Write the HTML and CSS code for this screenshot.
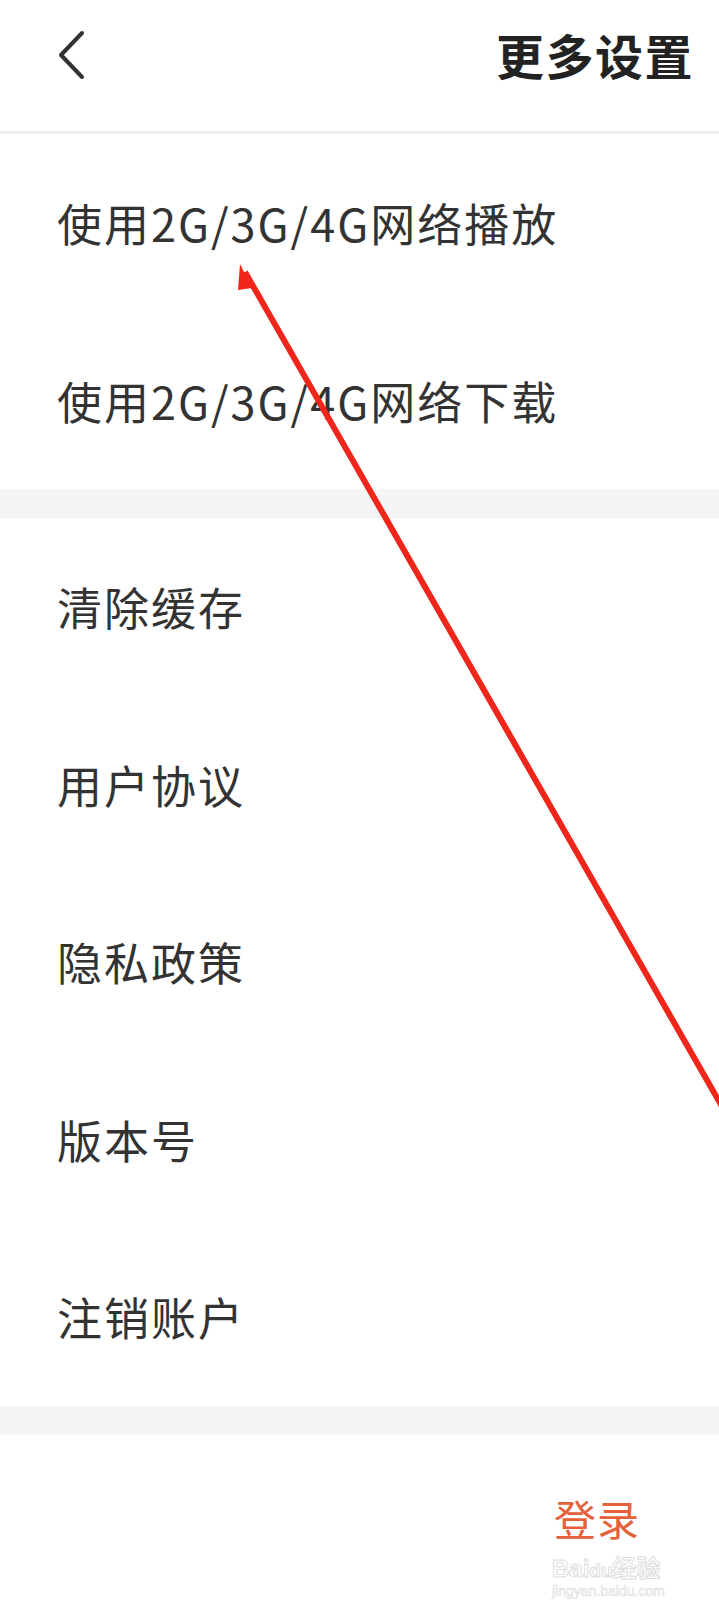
FILE: index.html
```html
<!DOCTYPE html>
<html lang="zh-CN">
<head>
    <meta charset="UTF-8">
    <meta name="viewport" content="width=device-width, initial-scale=1.0">
    <title>更多设置</title>

    <link rel="stylesheet" href="styles.css">
</head>
<body>
    <div class="page">
        <div class="header">
            <svg class="header__back" width="30" height="50" viewBox="0 0 30 50">
                <polyline points="26,3 5,25 26,47" fill="none" stroke="#333" stroke-width="4" stroke-linecap="round" stroke-linejoin="round"/>
            </svg>
            <h1 class="header__title">更多设置</h1>
        </div>

        <div class="group">
            <div class="row">使用2G/3G/4G网络播放</div>
            <div class="row">使用2G/3G/4G网络下载</div>
        </div>

        <div class="gap"></div>

        <div class="group">
            <div class="row">清除缓存</div>
            <div class="row">用户协议</div>
            <div class="row">隐私政策</div>
            <div class="row">版本号</div>
            <div class="row">注销账户</div>
        </div>

        <div class="gap"></div>

        <div class="footer">
            <div class="footer__login">登录</div>
        </div>

        <!-- red annotation arrow drawn over the screenshot -->
        <svg class="arrow" width="719" height="1600" viewBox="0 0 719 1600">
            <line x1="245" y1="272" x2="740" y2="1138" stroke="#f0261b" stroke-width="6"/>
            <polygon points="240,264 252,288 238,290" fill="#f0261b"/>
        </svg>

        <div class="watermark">
            <div class="watermark__brand">Bai<span class="watermark__du">du</span>经验</div>
            <div class="watermark__url">jingyan.baidu.com</div>
        </div>
    </div>
</body>
</html>
```

FILE: styles.css
```css
html, body {
    margin: 0;
    padding: 0;
    background-color: #ffffff;
    font-family: "Noto Sans CJK SC", "Noto Sans", sans-serif;
}

.page {
    position: relative;
    width: 719px;
    height: 1600px;
    overflow: hidden;
    background-color: #ffffff;
}

.header {
    height: 134px;
    display: flex;
    justify-content: space-between;
    align-items: flex-start;
    padding: 0 25px 0 56px;
    border-bottom: 3px solid #eeeeee;
    box-sizing: border-box;
}

.header__back {
    margin-top: 30px;
}

.header__title {
    margin: 24px 0 0 0;
    font-size: 48px;
    line-height: 60px;
    font-weight: 700;
    color: #222222;
    letter-spacing: 1.5px;
}

.group {
    display: flex;
    flex-direction: column;
}

.group > .row {
    height: 177.5px;
    display: flex;
    align-items: center;
    padding-left: 57px;
    font-size: 45px;
    color: #333333;
    letter-spacing: 2px;
}

.gap {
    height: 29px;
    background-color: #f4f5f6;
}

.footer {
    display: flex;
    justify-content: flex-end;
    padding: 61px 79px 0 0;
}

.footer__login {
    font-size: 42px;
    line-height: 44px;
    letter-spacing: 1px;
    color: #e5613b;
}

.arrow {
    position: absolute;
    left: 0;
    top: 0;
    pointer-events: none;
}

.watermark {
    position: absolute;
    left: 552px;
    top: 1558px;
    color: transparent;
    -webkit-text-stroke: 1px #dddddd;
    font-family: "Liberation Sans", "Noto Sans CJK SC", sans-serif;
}

.watermark__brand {
    font-size: 24px;
    line-height: 22px;
    font-weight: 700;
}

.watermark__du {
    font-size: 19px;
}

.watermark__url {
    margin-top: 2px;
    font-size: 14px;
    line-height: 15px;
    -webkit-text-stroke: 0.6px #dddddd;
}
```
